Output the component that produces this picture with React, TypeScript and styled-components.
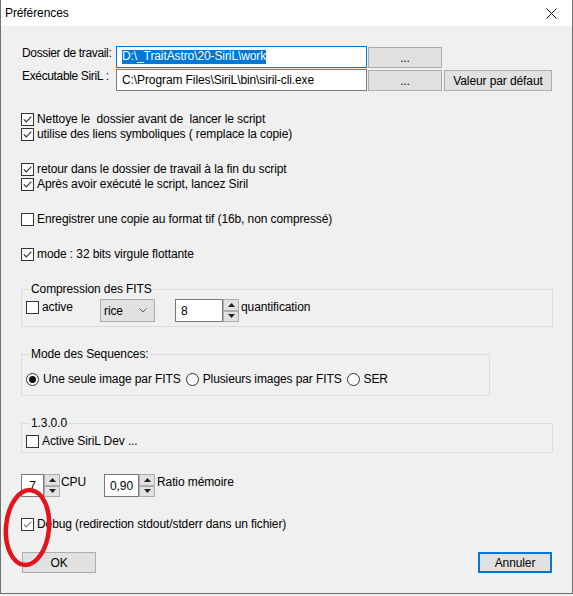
import React from "react";
import styled, { createGlobalStyle } from "styled-components";

const GlobalStyle = createGlobalStyle`
  html, body { margin: 0; padding: 0; background: #f0f0f0; }
  body {
    font-family: "Liberation Sans", Arial, sans-serif;
    font-size: 12px;
    letter-spacing: -0.1px;
    color: #000;
  }
  * { box-sizing: border-box; }
`;

const Window = styled.div`
  position: relative;
  width: 573px;
  height: 594px;
  border: 1px solid #707070;
  border-top: none;
  background: #f0f0f0;
  display: flex;
  flex-direction: column;
`;

const TitleBar = styled.div`
  height: 26px;
  background: #fff;
  display: flex;
  align-items: center;
  justify-content: space-between;
  padding: 0 15px 0 4px;
  flex-shrink: 0;
`;

const Title = styled.span`
  line-height: 15px;
`;

const Body = styled.div`
  display: flex;
  flex-direction: column;
  gap: 20px;
  padding: 20px 20px 0 20px;
`;

const PathGrid = styled.div`
  display: grid;
  grid-template-columns: 95px 251px 75px 110px;
  grid-template-rows: 22px 22px;
  row-gap: 1px;
  margin-bottom: 1px;
`;

const FieldLabel = styled.span`
  padding-left: 1px;
  line-height: 15px;
  letter-spacing: -0.35px;
  align-self: start;
  white-space: nowrap;
`;

const TextField = styled.div<{ $focused?: boolean }>`
  height: 22px;
  background: #fff;
  border: 1px solid ${(p) => (p.$focused ? "#0078d7" : "#7a7a7a")};
  display: flex;
  align-items: center;
  padding-left: 5px;
  white-space: nowrap;
  overflow: hidden;
`;

const Selected = styled.span`
  display: inline-block;
  background: #0078d7;
  color: #fff;
  height: 14px;
  line-height: 13px;
`;

const Button = styled.div<{ $focused?: boolean; $ml?: number; $w?: number }>`
  height: 21px;
  margin-left: ${(p) => p.$ml ?? 0}px;
  ${(p) => (p.$w ? `width: ${p.$w}px;` : "")}
  background: #e1e1e1;
  border: ${(p) => (p.$focused ? "2px solid #0078d7" : "1px solid #adadad")};
  display: flex;
  align-items: center;
  justify-content: center;
  white-space: nowrap;
  align-self: end;
`;

const CheckList = styled.div`
  display: flex;
  flex-direction: column;
`;

const CheckRow = styled.label<{ $mt?: number }>`
  display: flex;
  align-items: center;
  gap: 3px;
  height: 15px;
  line-height: 15px;
  white-space: pre;
  margin-top: ${(p) => p.$mt ?? 0}px;
`;

const Box = styled.span`
  width: 13px;
  height: 13px;
  border: 1px solid #333;
  background: #fff;
  display: inline-flex;
  flex-shrink: 0;
`;

const Check = ({ checked, color = "#333" }: { checked?: boolean; color?: string }) => (
  <Box>
    {checked && (
      <svg width="11" height="11" viewBox="0 0 11 11">
        <path d="M1.8 5.4 L4.3 8 L9.3 2.6" fill="none" stroke={color} strokeWidth="1.2" />
      </svg>
    )}
  </Box>
);

const Group = styled.fieldset<{ $w: number; $pt: number; $pb: number }>`
  margin: 0;
  width: ${(p) => p.$w}px;
  min-width: 0;
  border: 1px solid #dcdcdc;
  padding: ${(p) => p.$pt}px 4px ${(p) => p.$pb}px 4px;
`;

const Legend = styled.legend`
  padding: 0 1px;
  margin-left: 4px;
  line-height: 15px;
  font-size: 12px;
`;

const Row = styled.div<{ $mt?: number }>`
  display: flex;
  align-items: flex-start;
  margin-top: ${(p) => p.$mt ?? 0}px;
`;

const FixedCell = styled.div<{ $w: number }>`
  width: ${(p) => p.$w}px;
  flex-shrink: 0;
  display: flex;
`;

const Text = styled.span<{ $ml?: number }>`
  line-height: 16px;
  margin-left: ${(p) => p.$ml ?? 0}px;
  white-space: nowrap;
`;

const Combo = styled.div`
  width: 55px;
  height: 23px;
  margin-right: 20px;
  background: #e1e1e1;
  border: 1px solid #adadad;
  display: flex;
  align-items: center;
  justify-content: space-between;
  padding: 0 7px 0 3px;
  flex-shrink: 0;
`;

const SpinInput = styled.div<{ $w: number; $center?: boolean }>`
  width: ${(p) => p.$w}px;
  height: 23px;
  background: #fff;
  border: 1px solid #7a7a7a;
  display: flex;
  align-items: center;
  justify-content: ${(p) => (p.$center ? "center" : "flex-start")};
  padding-left: ${(p) => (p.$center ? 0 : 5)}px;
  flex-shrink: 0;
`;

const SpinCol = styled.div`
  width: 16px;
  height: 23px;
  display: flex;
  flex-direction: column;
  flex-shrink: 0;
`;

const SpinBtn = styled.div`
  flex: 1;
  background: #e1e1e1;
  border: 1px solid #adadad;
  display: flex;
  align-items: center;
  justify-content: center;
`;

const Spinner = () => (
  <SpinCol>
    <SpinBtn>
      <svg width="7" height="4" viewBox="0 0 7 4">
        <path d="M0 4 L3.5 0 L7 4 Z" fill="#222" />
      </svg>
    </SpinBtn>
    <SpinBtn>
      <svg width="7" height="4" viewBox="0 0 7 4">
        <path d="M0 0 L3.5 4 L7 0 Z" fill="#222" />
      </svg>
    </SpinBtn>
  </SpinCol>
);

const RadioRow = styled.div`
  display: flex;
  align-items: center;
  height: 15px;
  gap: 5px;
`;

const RadioItem = styled.label`
  display: flex;
  align-items: center;
  gap: 4px;
  line-height: 15px;
  white-space: nowrap;
`;

const RadioCircle = styled.span<{ $on?: boolean }>`
  width: 13px;
  height: 13px;
  border-radius: 50%;
  border: 1px solid #333;
  background: #fff;
  display: inline-flex;
  align-items: center;
  justify-content: center;
  flex-shrink: 0;
  &::after {
    content: "";
    width: 7px;
    height: 7px;
    border-radius: 50%;
    background: ${(p) => (p.$on ? "#111" : "transparent")};
  }
`;

const Footer = styled.div`
  display: flex;
  justify-content: space-between;
  padding-left: 1px;
`;

const Annotation = styled.svg`
  position: absolute;
  left: 0;
  top: 484px;
  pointer-events: none;
`;

export default function App() {
  return (
    <>
      <GlobalStyle />
      <Window>
        <TitleBar>
          <Title>Préférences</Title>
          <svg width="11" height="11" viewBox="0 0 11 11">
            <path d="M0.5 0.5 L10.5 10.5 M10.5 0.5 L0.5 10.5" stroke="#111" strokeWidth="1" />
          </svg>
        </TitleBar>
        <Body>
          <PathGrid>
            <FieldLabel>Dossier de travail:</FieldLabel>
            <TextField $focused>
              <Selected>D:\_TraitAstro\20-SiriL\work</Selected>
            </TextField>
            <Button $ml={1}>...</Button>
            <span />
            <FieldLabel>Exécutable SiriL :</FieldLabel>
            <TextField>C:\Program Files\SiriL\bin\siril-cli.exe</TextField>
            <Button $ml={1}>...</Button>
            <Button $ml={2}>Valeur par défaut</Button>
          </PathGrid>

          <CheckList>
            <CheckRow>
              <Check checked />
              Nettoye le  dossier avant de  lancer le script
            </CheckRow>
            <CheckRow>
              <Check checked />
              utilise des liens symboliques ( remplace la copie)
            </CheckRow>
          </CheckList>

          <CheckList>
            <CheckRow>
              <Check checked />
              retour dans le dossier de travail à la fin du script
            </CheckRow>
            <CheckRow>
              <Check checked />
              Après avoir exécuté le script, lancez Siril
            </CheckRow>
          </CheckList>

          <CheckList>
            <CheckRow>
              <Check />
              Enregistrer une copie au format tif (16b, non compressé)
            </CheckRow>
          </CheckList>

          <CheckList>
            <CheckRow>
              <Check checked />
              mode : 32 bits virgule flottante
            </CheckRow>
          </CheckList>

          <Group $w={532} $pt={2} $pb={4}>
            <Legend>Compression des FITS</Legend>
            <Row>
              <FixedCell $w={74}>
                <CheckRow $mt={1}>
                  <Check />
                  active
                </CheckRow>
              </FixedCell>
              <Combo>
                <span>rice</span>
                <svg width="8" height="5" viewBox="0 0 8 5">
                  <path d="M0.5 0.5 L4 4 L7.5 0.5" fill="none" stroke="#555" strokeWidth="1" />
                </svg>
              </Combo>
              <SpinInput $w={48}>8</SpinInput>
              <Spinner />
              <Text $ml={2}>quantification</Text>
            </Row>
          </Group>

          <Group $w={469} $pt={10} $pb={8}>
            <Legend>Mode des Sequences:</Legend>
            <RadioRow>
              <RadioItem>
                <RadioCircle $on />
                Une seule image par FITS
              </RadioItem>
              <RadioItem>
                <RadioCircle />
                Plusieurs images par FITS
              </RadioItem>
              <RadioItem>
                <RadioCircle />
                SER
              </RadioItem>
            </RadioRow>
          </Group>

          <Group $w={532} $pt={3} $pb={3}>
            <Legend>1.3.0.0</Legend>
            <CheckRow>
              <Check />
              Active SiriL Dev ...
            </CheckRow>
          </Group>

          <Row $mt={1}>
            <FixedCell $w={83}>
              <SpinInput $w={23} $center>7</SpinInput>
              <Spinner />
              <Text $ml={1}>CPU</Text>
            </FixedCell>
            <SpinInput $w={35} $center>0,90</SpinInput>
            <Spinner />
            <Text $ml={2}>Ratio mémoire</Text>
          </Row>

          <CheckList>
            <CheckRow>
              <Check checked color="#808080" />
              Debug (redirection stdout/stderr dans un fichier)
            </CheckRow>
          </CheckList>

          <Footer>
            <Button $w={74}>OK</Button>
            <Button $w={74} $focused>Annuler</Button>
          </Footer>
        </Body>

        <Annotation width="60" height="90" viewBox="0 0 60 90">
          <ellipse
            cx="26.5"
            cy="43.5"
            rx="21.5"
            ry="37.5"
            transform="rotate(5 26.5 43.5)"
            fill="none"
            stroke="#e4131c"
            strokeWidth="4.5"
          />
        </Annotation>
      </Window>
    </>
  );
}
